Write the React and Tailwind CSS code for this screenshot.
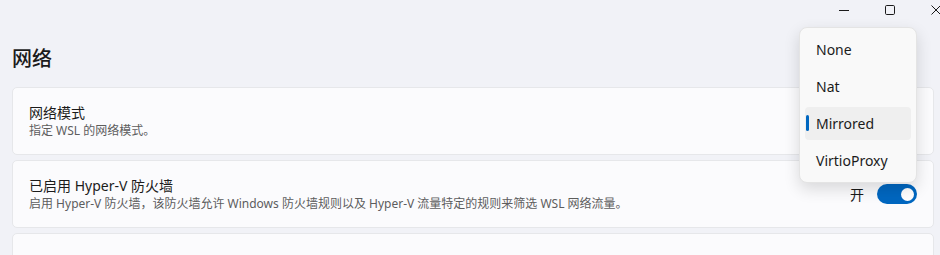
import React from 'react'

const font = { fontFamily: '"Segoe UI", "Noto Sans", "Noto Sans CJK SC", sans-serif' }

const modes = ['None', 'Nat', 'Mirrored', 'VirtioProxy']

const TitleBar = () => (
    <div className="flex justify-end h-[20px] mr-[-19px] text-[#1b1b1b]">
        <div className="w-[46px] flex items-center justify-center">
            <svg width="10" height="10" viewBox="0 0 10 10"><path d="M0 5.5h10" stroke="currentColor" strokeWidth="1" /></svg>
        </div>
        <div className="w-[46px] flex items-center justify-center">
            <svg width="10" height="10" viewBox="0 0 10 10"><rect x="0.5" y="0.5" width="9" height="9" rx="1.2" fill="none" stroke="currentColor" strokeWidth="1" /></svg>
        </div>
        <div className="w-[46px] flex items-center justify-center">
            <svg width="10" height="10" viewBox="0 0 10 10"><path d="M0.5 0.5l9 9M9.5 0.5l-9 9" stroke="currentColor" strokeWidth="1" /></svg>
        </div>
    </div>
)

const Card = ({ title, desc, children }) => (
    <div className="h-[68px] shrink-0 flex items-center px-[16px] bg-[#fbfbfd] border border-[#e6e7ea] rounded-[5px]">
        <div className="flex flex-col flex-1">
            <span className="text-[14px] leading-[20px] text-[#1b1b1b]">{title}</span>
            <span className="text-[12px] leading-[16px] text-[#5d5d5d]">{desc}</span>
        </div>
        {children}
    </div>
)

const Toggle = () => (
    <div className="flex items-center gap-[13px]">
        <span className="text-[14px] text-[#1b1b1b]">开</span>
        <div className="w-[40px] h-[20px] rounded-full bg-[#0067c0] flex items-center justify-end pr-[3px]">
            <div className="w-[13px] h-[13px] rounded-full bg-white" />
        </div>
    </div>
)

export default function App() {
    return (
        <div className="relative w-[940px] h-[255px] overflow-hidden bg-[#f1f2f7]" style={font}>
            <TitleBar />
            <main className="pl-[12px] pr-[6px]">
                <h1 className="pt-[25px] text-[20px] leading-[28px] font-medium text-[#1b1b1b]">网络</h1>
                <div className="mt-[14px] flex flex-col gap-[5px]">
                    <Card title="网络模式" desc="指定 WSL 的网络模式。" />
                    <Card
                        title="已启用 Hyper-V 防火墙"
                        desc="启用 Hyper-V 防火墙，该防火墙允许 Windows 防火墙规则以及 Hyper-V 流量特定的规则来筛选 WSL 网络流量。"
                    >
                        <Toggle />
                    </Card>
                    <Card title="" desc="" />
                </div>
            </main>

            {/* combo box popup */}
            <div className="absolute left-[799px] top-[27px] w-[118px] py-[5px] px-[5px] flex flex-col gap-[4px] bg-[#f9f9f9] border border-[#e4e4e4] rounded-[8px] shadow-[0_6px_16px_rgba(0,0,0,0.14)]">
                {modes.map(m => (
                    <div
                        key={m}
                        className={`relative h-[33px] flex items-center pl-[11px] rounded-[4px] text-[14px] text-[#1b1b1b] ${m === 'Mirrored' ? 'bg-[#efefef]' : ''}`}
                    >
                        {m === 'Mirrored' && <span className="absolute left-[1px] top-[8px] w-[3px] h-[16px] rounded-full bg-[#0067c0]" />}
                        {m}
                    </div>
                ))}
            </div>
        </div>
    )
}
